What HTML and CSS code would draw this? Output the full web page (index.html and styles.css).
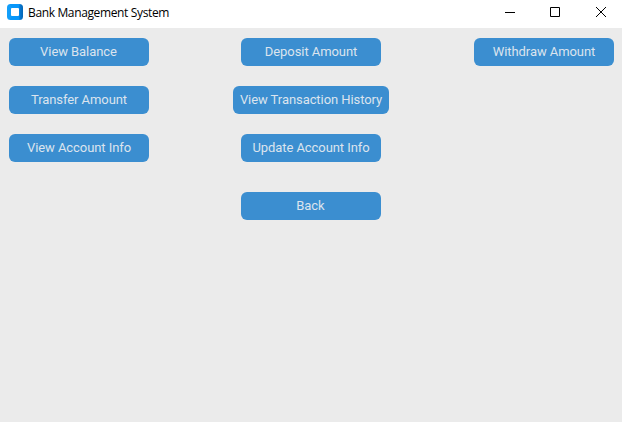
FILE: index.html
```html
<!DOCTYPE html>
<html lang="en">
<head>
<meta charset="utf-8">
<title>Bank Management System</title>
<link rel="stylesheet" href="styles.css">
</head>
<body>
<header class="titlebar">
  <svg class="logo" width="16" height="16" viewBox="0 0 16 16">
    <defs><linearGradient id="g" x1="0" y1="0" x2="1" y2="0"><stop offset="0" stop-color="#14a0fa"/><stop offset=".7" stop-color="#0892f5"/><stop offset=".85" stop-color="#0674cc"/><stop offset="1" stop-color="#0566b4"/></linearGradient></defs>
    <rect width="16" height="16" rx="3.500" fill="url(#g)"/>
    <path d="M3 0h9.500l-1 4H5zM3 16h9.500l-1-4H5z" fill="#0797fa"/>
    <rect x="4" y="4" width="8" height="8" rx="1" fill="#fff"/>
  </svg>
  <h1 class="title">Bank Management System</h1>
  <div class="controls">
    <svg width="45" height="28" viewBox="0 0 45 28"><path d="M17 12.500h10"/></svg>
    <svg width="45" height="28" viewBox="0 0 45 28"><path d="M17.500 7.500h9v9h-9z"/></svg>
    <svg width="45" height="28" viewBox="0 0 45 28"><path d="M18 7l10 10M28 7l-10 10"/></svg>
  </div>
</header>
<main class="grid">
  <button class="nudge">View Balance</button><button class="mid">Deposit Amount</button><button class="end">Withdraw Amount</button>
  <button>Transfer Amount</button><button class="mid wide">View Transaction History</button><span></span>
  <button>View Account Info</button><button class="mid">Update Account Info</button><span></span>
  <button class="mid back nudge">Back</button>
</main>
</body>
</html>
```
FILE: styles.css
```css
* { box-sizing: border-box; }
body { margin: 0; height: 422px; background: #ebebeb; overflow: hidden; }
.titlebar { display: flex; align-items: flex-start; height: 28px; padding-left: 7px; background: #fff; }
.logo { margin-top: 4px; }
.title { margin: 5px 0 0 5px; font: 400 12px/16px "Open Sans", sans-serif; letter-spacing: -0.36px; color: #000; white-space: nowrap; }
.controls { display: flex; margin: 0 -1px 0 auto; }
.controls path { fill: none; stroke: #000; stroke-width: 1; }
.grid { display: grid; grid-template-columns: 224px 156px 1fr; row-gap: 20px; padding: 10px 8px 0 9px; }
button { width: 140px; height: 28px; padding: 0; border: 0; border-radius: 6px; background: #3b8ed0; color: #dce4ee; font: 400 13px/28px Roboto, sans-serif; letter-spacing: -0.07px; white-space: nowrap; }
.mid { justify-self: center; }
.end { justify-self: end; }
.wide { width: 156px; }
.back { grid-column: 2; margin-top: 10px; }
.nudge { padding-right: 1px; }
```
